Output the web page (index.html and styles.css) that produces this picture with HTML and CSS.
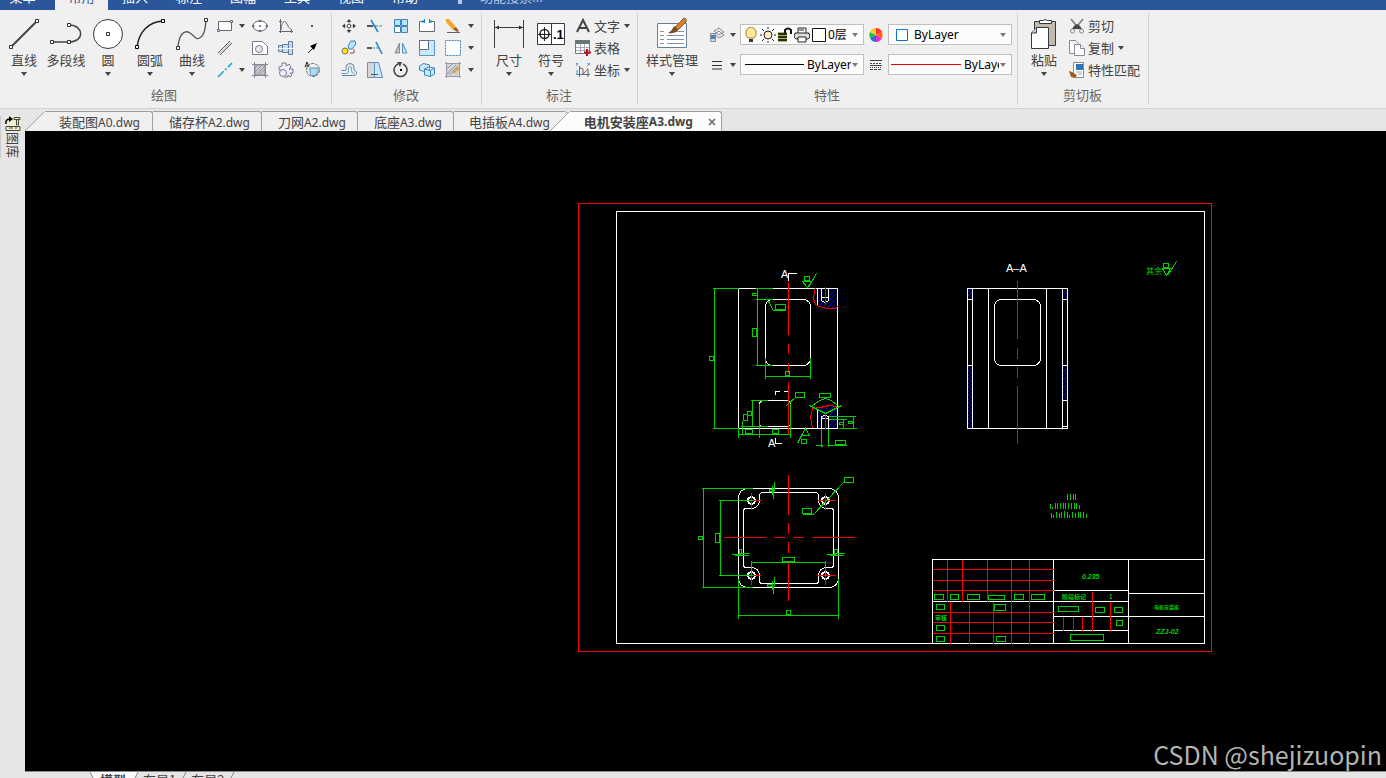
FILE: index.html
```html
<!DOCTYPE html>
<html lang="zh-CN">
<head>
<meta charset="utf-8">
<title>电机安装座A3.dwg</title>
<link rel="stylesheet" href="styles.css">
</head>
<body>
<svg class="defs" aria-hidden="true">
  <symbol id="down" viewBox="0 0 8 8"><path d="M1 2h6L4 6z" fill="#444"/></symbol>
</svg>

<nav class="menubar">
  <a href="#">菜单</a><a href="#" class="current">常用</a><a href="#">插入</a><a href="#">标注</a><a href="#">图幅</a><a href="#">工具</a><a href="#">视图</a><a href="#">帮助</a>
  <svg class="tip" viewBox="0 0 6 12"><circle cx="3" cy="4" r="3"/><path d="M1 7h4v4H1z"/></svg>
  <a href="#" class="search">功能搜索...</a>
</nav>

<header class="ribbon">
  <section class="group">
    <div class="tools">
      <div class="bigs">
        <button class="big"><svg viewBox="0 0 32 32"><path d="M4 28 28 4" stroke="#444" stroke-width="2"/><g fill="#fff" stroke="#333"><path d="M1.500 27.500h3v3h-3zM27.500 1.500h3v3h-3z"/></g></svg><span>直线</span><svg class="down"><use href="#down"/></svg></button>
        <button class="big"><svg viewBox="0 0 32 32" fill="none" stroke="#444"><path d="M2 24h17c16 0 15-17 0-17" stroke-width="1.500"/><g fill="#fff" stroke="#333"><path d="M.5 22.500h3v3h-3zM17.500 22.500h3v3h-3zM17.500 5.500h3v3h-3z"/></g></svg><span>多段线</span></button>
        <button class="big"><svg viewBox="0 0 32 32"><circle cx="16" cy="16" r="14.500" fill="#fff" stroke="#333a44"/><path d="M14.500 14.500h3v3h-3z" fill="#fff" stroke="#333"/></svg><span>圆</span><svg class="down"><use href="#down"/></svg></button>
        <button class="big"><svg viewBox="0 0 32 32"><path d="M3 29C5 14 14 4 29 3" fill="none" stroke="#222" stroke-width="1.500"/><path d="M1.500 27.500h3v3h-3zM27.500 1.500h3v3h-3z" fill="#fff" stroke="#000"/></svg><span>圆弧</span><svg class="down"><use href="#down"/></svg></button>
        <button class="big"><svg viewBox="0 0 32 32"><path d="M2 29C3 17 8 11 14 15s6 8 11 4 4-11 5-16" fill="none" stroke="#555" stroke-width="1.300"/><path d="M.5 28.500h3v3h-3zM28.500.5h3v3h-3z" fill="#fff" stroke="#333"/></svg><span>曲线</span><svg class="down"><use href="#down"/></svg></button>
      </div>
      <div class="grid draw">
        <button aria-label="矩形"><svg viewBox="0 0 16 16" fill="#fff" stroke="#667"><path d="M1.500 3.500h13v9h-13z"/><path d="M.5 11.500h2v2h-2zM13.500 2.500h2v2h-2z"/></svg></button><button class="drop" aria-label="更多"><svg class="down"><use href="#down"/></svg></button>
        <button aria-label="椭圆"><svg viewBox="0 0 16 16" fill="#fff" stroke="#667"><ellipse cx="8" cy="8" rx="7" ry="5"/><path d="M7.500 7.500h1v1h-1z"/><path d="M7 2.500h2v1H7zM0 7.500h2v1H0zM14 7.500h2v1h-2zM7 12.500h2v1H7z"/></svg></button>
        <button aria-label="公式曲线"><svg viewBox="0 0 16 16" fill="none" stroke="#667"><path d="M2.500 1v14M1 13.500h14M1 3.500h3M13.500 12v3"/><path d="M3 12C4 2 7 2 9 6s2 4 5 6"/></svg></button>
        <button aria-label="点"><svg viewBox="0 0 16 16"><path d="M7 7h2v2H7z" fill="#555"/></svg></button>
        <button aria-label="平行线"><svg viewBox="0 0 16 16" stroke="#556"><path d="M1 13 13 1M3 15 15 3"/><path d="m2 14 12-12" stroke="#bbb"/></svg></button><i></i>
        <button aria-label="局部放大"><svg viewBox="0 0 16 16" fill="#fff" stroke="#778"><path d="M.5 14.500v-13h10l5 5v8z"/><circle cx="7" cy="9" r="3.500" fill="#eee"/><path d="M7 9h.5"/></svg></button>
        <button aria-label="轴"><svg viewBox="0 0 16 16" fill="#c4dcf2" stroke="#667f98"><path d="M.5 5.500h4v6h-4zM4.500 4.500h6v8h-6zM10.500 1.500h4v13h-4z"/><path d="M0 8.500h16" stroke="#fff"/></svg></button>
        <button aria-label="箭头"><svg viewBox="0 0 16 16"><path d="m4 13 6-6" stroke="#222"/><path d="m13 3-3 7-4-4z"/></svg></button>
        <button aria-label="中心线"><svg viewBox="0 0 16 16"><path d="M1 15 15 1" stroke="#16a0e0" stroke-width="1.500" stroke-dasharray="8 2 2 2"/></svg></button><button class="drop" aria-label="更多"><svg class="down"><use href="#down"/></svg></button>
        <button aria-label="填充"><svg viewBox="0 0 16 16" stroke="#889" fill="none"><path d="M3 3h10v10H3z" fill="#c4c8cc"/><path d="m3 6 3-3m-3 7 7-7m-6 10 9-9m-6 9 6-6" stroke="#999"/><path d="M0 2.500h16M2.500 0v16M0 13.500h16M13.500 0v16"/></svg></button>
        <button aria-label="齿轮"><svg viewBox="0 0 16 16" fill="#eef" stroke="#778"><path d="M4 1h4v3l3-2 2 3-2 2h4v4h-3l2 2-2 2-2-2v2H6"/><path d="M4 1v3L1 5v3h2"/><circle cx="5" cy="11" r="3.500"/></svg></button>
        <button aria-label="剖视"><svg viewBox="0 0 16 16" fill="none" stroke="#667"><circle cx="9" cy="8" r="6.500" stroke-dasharray="3 1"/><path d="M6 6h8v4q-1 4-6 4-2-1-2-4z" fill="#a9dcf5" stroke="#68a"/><path d="M1 5 3 0l2 5M2 4h2" stroke="#222"/></svg></button>
      </div>
    </div>
    <h2>绘图</h2>
  </section>

  <section class="group">
    <div class="tools">
      <div class="grid modify">
        <button aria-label="移动"><svg viewBox="0 0 16 16" fill="#444"><path d="M8 1 5.500 4h5zM8 15l-2.500-3h5zM1 8l3-2.500v5zM15 8l-3-2.500v5z"/><path d="M6.500 6.500h3v3h-3z" fill="#fff" stroke="#667"/><path d="M4 7.500h2v1H4zM10 7.500h2v1h-2zM7.500 4h1v2h-1zM7.500 10h1v2h-1z" opacity=".6"/></svg></button>
        <button aria-label="裁剪"><svg viewBox="0 0 16 16" fill="none"><path d="M0 8h6" stroke="#555" stroke-width="2"/><path d="M8 8h8" stroke="#38a" stroke-dasharray="3 1"/><path d="m4 2 7 12" stroke="#1684d0" stroke-width="1.500"/></svg></button>
        <button aria-label="阵列"><svg viewBox="0 0 16 16" fill="#b7e3f8" stroke="#3b83bd"><path d="M1.500 1.500h6v6h-6zM8.500 1.500h6v6h-6zM8.500 8.500h6v6h-6z"/><path d="M1.500 8.500h6v6h-6z" fill="#fff"/></svg></button>
        <button aria-label="打断"><svg viewBox="0 0 16 16" fill="none"><path d="M4 3.500H.5v10h15v-10H12" stroke="#667" fill="#fff"/><path d="M3 3.500h3M10 3.500h3" stroke="#1684d0" stroke-width="2"/><path d="M5.500 1v4M10.500 1v4" stroke="#1684d0"/></svg></button>
        <button aria-label="删除"><svg viewBox="0 0 16 16"><path d="m1 1 3 0 7 8-3 3-7-8z" fill="#f5a623"/><path d="m8 11 3-2 3 4-2 1z" fill="#9a5a3a"/><path d="M2 14.500h13" stroke="#666"/></svg></button><button class="drop" aria-label="更多"><svg class="down"><use href="#down"/></svg></button>
        <button aria-label="复制对象"><svg viewBox="0 0 16 16"><path d="m7 6 3-5h4l1 3-4 5H8z" fill="#b7e3f8" stroke="#3b83bd"/><circle cx="4" cy="11" r="3" fill="#ffe600" stroke="#776"/><path d="M9 13h4v-4" fill="none" stroke="#a43"/></svg></button>
        <button aria-label="延伸"><svg viewBox="0 0 16 16"><path d="M0 8h5" stroke="#555" stroke-width="2"/><path d="M6 8h6" stroke="#38a" stroke-dasharray="2 1"/><path d="m9 2 6 12" stroke="#1684d0" stroke-width="1.500"/></svg></button>
        <button aria-label="镜像"><svg viewBox="0 0 16 16"><path d="M6.500 3v10H2z" fill="#bbb" stroke="#889"/><path d="M9.500 3v10H14z" fill="#b7e3f8" stroke="#5a93bd"/></svg></button>
        <button aria-label="缩放"><svg viewBox="0 0 16 16"><path d="M.5.500h15v15H.500z" fill="#c8eafa" stroke="#5a93bd"/><path d="M.5.500h9v9h-9z" fill="#fff" stroke="#667"/></svg></button>
        <button aria-label="选择"><svg viewBox="0 0 16 16"><path d="M.5.500h15v15H.500z" fill="#fff" stroke="#3b83bd" stroke-dasharray="2 1"/></svg></button><button class="drop" aria-label="更多"><svg class="down"><use href="#down"/></svg></button>
        <button aria-label="等距"><svg viewBox="0 0 16 16" fill="none" stroke="#667f98"><path d="M.5 8.500h4q1 0 .5-3 0-4 4-4t4 4q-.5 3 1 3 2 1 1.500 3t-3 2H1"/><path d="M.5 11.500h5q3-1 2-3-1-4 1.500-4t1.500 4q0 3 3 3" stroke="#55a6d9"/></svg></button>
        <button aria-label="拉伸"><svg viewBox="0 0 16 16"><path d="M.5.500h9v15h-9z" fill="#d4d6da" stroke="#889"/><path d="M7.500.5h4l4 15h-8z" fill="#c8eafa" stroke="#5a93bd"/><path d="M4 12.500h7" stroke="#555"/></svg></button>
        <button aria-label="旋转"><svg viewBox="0 0 16 16"><path d="M10 2a6.500 6.500 0 1 1-5 0" fill="none" stroke="#444" stroke-width="1.500"/><path d="M4 0h5L7 5z" fill="#444"/><path d="M7 7h2v2H7z"/></svg></button>
        <button aria-label="分解"><svg viewBox="0 0 16 16" fill="#c8eafa" stroke="#3b83bd"><path d="m.5 4 4-2.500 6 1.500v5l-4 2-6-2z"/><path d="m5.500 7 4-2 6 1v6l-4 2.500-6-1.500zM5.500 7l6 1.500 4-2.500M11.500 8.500v6"/></svg></button>
        <button aria-label="编辑填充"><svg viewBox="0 0 16 16" fill="none" stroke="#667"><path d="M1.500 1.500h13v13h-13z" fill="#d0d4d8"/><path d="m2 7 5-5m-5 10 9-9m-7 10 9-9" stroke="#999"/><path d="M0 1.500h16M1.500 0v16M0 14.500h16M14.500 0v16" stroke="#99a"/><path d="m8 11 7-6" stroke="#e69b2f" stroke-width="2"/></svg></button><button class="drop" aria-label="更多"><svg class="down"><use href="#down"/></svg></button>
      </div>
    </div>
    <h2>修改</h2>
  </section>

  <section class="group">
    <div class="tools">
      <div class="bigs dims">
        <button class="big"><svg viewBox="0 0 32 32"><path d="M1.500 2v28M30.500 2v28M2 9.500h28" stroke="#3a3f4a" fill="none"/><path d="m2 9.500 4-2v4zM30 9.500l-4-2v4z" fill="#333"/></svg><span>尺寸</span><svg class="down"><use href="#down"/></svg></button>
        <button class="big"><svg viewBox="0 0 32 32"><path d="M2.500 5.500h27v21h-27zM16.500 5v22" fill="#fff" stroke="#333a44"/><circle cx="9.500" cy="16" r="4.500" fill="none" stroke="#222" stroke-width="1.500"/><path d="M3 16.500h13M9.500 9v14" stroke="#222"/><text x="18" y="21" class="symbol-no">.1</text></svg><span>符号</span><svg class="down"><use href="#down"/></svg></button>
      </div>
      <div class="list">
        <button><svg viewBox="0 0 16 16"><path d="M2 14 8 2l6 12M4 10h8" fill="none" stroke="#444" stroke-width="2"/></svg><span>文字</span><svg class="down"><use href="#down"/></svg></button>
        <button><svg viewBox="0 0 16 16"><path d="M.5.500h14v13H.500z" fill="#fff" stroke="#778"/><path d="M0 0h15v4H0z" fill="#677"/><path d="M1 7.500h13M1 10.500h13M5.500 4v9M9.500 4v9" stroke="#aab"/><path d="M12 9v7M9 12.500h7" stroke="#c1121f" stroke-width="2"/></svg><span>表格</span></button>
        <button><svg viewBox="0 0 16 16" fill="none"><path d="M4.500 4v11M2 12.500h13" stroke="#667"/><path d="m5 6 3 1v5l5-5v8" stroke="#667"/><path d="m1 1 2 2M3 1 1 4M12 1l3 2M15 1l-3 3M1 9h2l-2 3h2" stroke="#49a0dc"/></svg><span>坐标</span><svg class="down"><use href="#down"/></svg></button>
      </div>
    </div>
    <h2>标注</h2>
  </section>

  <section class="group props">
    <div class="tools">
      <button class="big wide"><svg viewBox="0 0 32 32"><path d="M1.500 5.500h29v24h-29z" fill="#fff" stroke="#667f98"/><path d="M4 13.500h4M4 17.500h4M4 21.500h4M4 25.500h4M11 17.500h17M11 21.500h17M11 25.500h17M20 13.500h8" stroke="#8492a5"/><path d="M19 9 28 0l2 1v3l-8 8z" fill="#d9822b" stroke="#8a5a2b"/><path d="m18 8 4 4q-3 4-10 3 4-2 6-7z" fill="#7a4a22"/></svg><span>样式管理</span><svg class="down"><use href="#down"/></svg></button>
      <div class="combos">
        <button aria-label="图层"><svg viewBox="0 0 16 16" fill="#eee" stroke="#889"><path d="m5 4 5-3 5 4-5 3zM5 7l5-3 5 4-5 3z"/><path d="M1.500 6.500h5v8h-5z" fill="#cde"/><path d="M2 8h4v4H2z" fill="#4a86bd" stroke="none"/></svg></button>
        <button class="drop" aria-label="更多图层"><svg class="down"><use href="#down"/></svg></button>
        <label class="combo layer">
          <svg viewBox="0 0 16 16"><path d="M5 11Q2 8 3 4q2-4 5-4t5 4q1 4-2 7z" fill="#ffe9a0" stroke="#a88420"/><path d="M6 12h4v3H6z" fill="#333"/></svg>
          <svg viewBox="0 0 16 16" fill="none" stroke="#222"><circle cx="8" cy="8" r="4" fill="#ffe9c8"/><path d="M8 0v2M8 14v2M0 8h2M14 8h2M2 2l2 2M12 12l2 2M14 2l-2 2M4 12l-2 2"/></svg>
          <svg viewBox="0 0 16 16"><path d="M1 6h9v2H1zM1 9h9v2H1zM1 12h9v2H1z"/><path d="M1 5h9v10H1z" fill="#560" opacity=".5"/><path d="M8 6V3q3-3 6 0v4" fill="none" stroke="#111" stroke-width="2"/></svg>
          <svg viewBox="0 0 16 16" fill="#fff" stroke="#222"><path d="M4 6V1h8v5"/><path d="M1 6h14l1 4-2 2H2l-2-2z" fill="#ddd"/><path d="M4 10h8v5H4zM5 3h5"/></svg>
          <svg viewBox="0 0 16 16"><path d="M1.500 1.500h13v13h-13z" fill="#fff" stroke="#111"/></svg>
          <select aria-label="当前图层"><option>0层</option></select><svg class="down"><use href="#down"/></svg>
        </label>
        <svg class="wheel" viewBox="-8 -8 16 16"><path d="M0 0V-7A7 7 0 0 1 6-3z" fill="#f33"/><path d="m0 0 6-3A7 7 0 0 1 6 3z" fill="#f60"/><path d="m0 0 6 3A7 7 0 0 1 0 7z" fill="#d3c"/><path d="M0 0v7a7 7 0 0 1-6-4z" fill="#36d"/><path d="m0 0-6 3a7 7 0 0 1 0-6z" fill="#2b4"/><path d="m0 0-6-3a7 7 0 0 1 6-4z" fill="#fc2"/></svg>
        <label class="combo color"><svg viewBox="0 0 16 16"><path d="M2.500 2.500h11v11h-11z" fill="#fff" stroke="#0a74d0"/></svg><select aria-label="颜色"><option>ByLayer</option></select><svg class="down"><use href="#down"/></svg></label>
        <button aria-label="线宽"><svg viewBox="0 0 16 16" stroke="#333"><path d="M3 4.500h10M3 8.500h10M3 12h10"/></svg></button>
        <button class="drop" aria-label="更多线宽"><svg class="down"><use href="#down"/></svg></button>
        <label class="combo width"><i class="line"></i><select aria-label="线宽值"><option>ByLayer</option></select><svg class="down"><use href="#down"/></svg></label>
        <svg class="wheel" viewBox="0 0 16 16" stroke="#444"><path d="M2 3.500h12"/><path d="M2 6.500h12" stroke-dasharray="2 1"/><path d="M2 8.500h12"/><path d="M2 10.500h12" stroke-dasharray="1 1"/><path d="M2 12.500h12" stroke-dasharray="3 1"/></svg>
        <label class="combo type"><i class="line red"></i><select aria-label="线型"><option>ByLayer</option></select><svg class="down"><use href="#down"/></svg></label>
      </div>
    </div>
    <h2>特性</h2>
  </section>

  <section class="group">
    <div class="tools">
      <button class="big paste"><svg viewBox="0 0 32 32"><path d="M6.500 3.500h21v24h-21z" fill="#c3b9ae" stroke="#333a44"/><path d="M11.500 5.500v-3h4q1-2 4 0h4v3z" fill="#fff" stroke="#333"/><path d="m3.500 15 5-5.500h12v21h-17z" fill="#fff" stroke="#333a44"/><path d="M3.500 15h5V9.500" fill="#ccd" stroke="#333a44"/></svg><span>粘贴</span><svg class="down"><use href="#down"/></svg></button>
      <div class="list clip">
        <button><svg viewBox="0 0 16 16" fill="none" stroke="#888"><path d="m2 1 8 10M14 1 6 11" stroke-width="2"/><path d="m5 8 3-2 3 2 2 3H3z" fill="#444" stroke="none"/><circle cx="3.500" cy="13" r="2"/><circle cx="12.500" cy="13" r="2"/></svg><span>剪切</span></button>
        <button><svg viewBox="0 0 16 16" fill="#fff" stroke="#889"><path d="M.5.500h6l3 3v10h-9z"/><path d="M5.500 4.500h6l4 4v7h-10z"/><path d="M11.500 4.500v4h4"/></svg><span>复制</span><svg class="down"><use href="#down"/></svg></button>
        <button><svg viewBox="0 0 16 16"><path d="M4.500.5h10v15h-10z" fill="#fff" stroke="#889"/><path d="M7 2h7v6H7z" fill="#3474b0"/><path d="M7 10h6M9 12h4" stroke="#9ab"/><path d="m0 9 3 1 5 3-2 3-4-1z" fill="#a85a1c"/></svg><span>特性匹配</span></button>
      </div>
    </div>
    <h2>剪切板</h2>
  </section>
</header>

<main class="work">
  <aside class="dock"><button><svg viewBox="0 0 16 16"><path d="M0 0h16v16H0z" fill="#f0f0d0"/><path d="M1 8V5q1-2 4-2" fill="none" stroke="#000" stroke-width="1.500"/><path d="m4 0 4 3-4 3z"/><path d="M9 1.500h6v2H9zM11.500 4v5h2V4M1 10.500h14v4H1zM4 12h4M10 12h2" fill="none" stroke="#444"/></svg><span>图库</span></button></aside>
  <div class="document">
    <nav class="doctabs">
      <svg class="slant" viewBox="0 0 20 20"><path d="M0 20 20 0v20z" fill="#f0f0f0"/><path d="M0 20 19 1" stroke="#a0a0a0"/></svg>
      <a href="#" class="first">装配图<b>A0.dwg</b></a><a href="#">储存杯<b>A2.dwg</b></a><a href="#">刀网<b>A2.dwg</b></a><a href="#">底座<b>A3.dwg</b></a><a href="#" class="last">电插板<b>A4.dwg</b></a>
      <svg class="slant" viewBox="0 0 20 20"><path d="M0 0h15l3 2L0 20z" fill="#f0f0f0"/><path d="M0 20 20 0v20z" fill="#fcfcfc"/><path d="M0 .5h15l3 2M0 20 19 1" stroke="#a0a0a0" fill="none"/></svg>
      <a href="#" class="active">电机安装座<b>A3.dwg</b><svg viewBox="0 0 8 8"><path d="m1 1 6 6M7 1 1 7" stroke="#666" stroke-width="1.500"/></svg></a>
    </nav>
    <div class="canvas">
      <svg class="drawing" viewBox="25 131 1361 640">
        <defs><clipPath id="cut">
          <path d="M817 288h20v18l-4 2h-8l-8-3zM817 408l11-3 9 1v22h-20zM967 288h5v11h-5zM967 365h5v63h-5zM1062 288h5v11h-5zM1062 365h5v35h-5zM1062 426h5v2h-5z"/>
        </clipPath></defs>
        <g transform="translate(.5 .5)">
          <!-- hatched sections -->
          <g clip-path="url(#cut)" class="hatch">
            <path d="M817 292l20-20M817 297l20-20M817 302l20-20M817 307l20-20M817 312l20-20M817 317l20-20M817 322l20-20M817 327l20-20"/>
            <path d="M817 407l20-20M817 412l20-20M817 417l20-20M817 422l20-20M817 427l20-20M817 432l20-20M817 437l20-20M817 442l20-20M817 447l20-20"/>
            <path d="M967 292l5-5M967 296l5-5M967 300l5-5M967 304l5-5M967 368l5-5M967 372l5-5M967 376l5-5M967 380l5-5M967 384l5-5M967 388l5-5M967 392l5-5M967 396l5-5M967 400l5-5M967 404l5-5M967 408l5-5M967 412l5-5M967 416l5-5M967 420l5-5M967 424l5-5M967 428l5-5M967 432l5-5"/>
            <path d="M1062 292l5-5M1062 296l5-5M1062 300l5-5M1062 304l5-5M1062 368l5-5M1062 372l5-5M1062 376l5-5M1062 380l5-5M1062 384l5-5M1062 388l5-5M1062 392l5-5M1062 396l5-5M1062 400l5-5M1062 404l5-5M1062 430l5-5"/>
          </g>
          <path d="M821 288h7v13h-7zM821 417h7v11h-7z" fill="#000"/>
          <!-- outlines -->
          <g class="white">
            <path d="M616 211h588v432H616zM738 288h99v140h-99z"/>
            <rect x="765" y="299" width="45" height="66" rx="7"/><rect x="759" y="400" width="31" height="26" rx="4"/>
            <path d="M788 280v-7h8M775 394v-3h4M783 391h5M775 437v6h6M817 288v17M821 288v12l3 2h1l3-2v-12M821 297h7M817 408v20M821 428v-12l3-1h1l3 1v12M821 418h7"/>
            <rect x="738" y="488" width="100" height="99" rx="9"/>
            <path d="M761 492h55l2 2v6a8 8 0 0 0 8 8h6l1 2v55l-1 2h-6a8 8 0 0 0-8 8v7l-2 1h-55l-2-1v-7a8 8 0 0 0-8-8h-7l-1-2v-55l1-2h7a8 8 0 0 0 8-8v-6z"/>
            <circle cx="751" cy="500" r="4"/><circle cx="825" cy="500" r="4"/><circle cx="751" cy="575" r="4"/><circle cx="825" cy="575" r="4"/>
            <circle cx="751" cy="500" r="3"/><circle cx="825" cy="500" r="3"/><circle cx="751" cy="575" r="3"/><circle cx="825" cy="575" r="3"/>
            <path d="M967 288h100v140H967zM972 288v140M988 288v140M1046 288v140M1062 288v140M967 299h5M967 365h5M1062 299h5M1062 365h5M1062 400h5M1062 426h5"/>
            <rect x="994" y="299" width="46" height="66" rx="7"/>
          </g>
          <!-- centre lines and frame -->
          <g class="redline">
            <path d="M578 203h633v448H578z"/>
            <path d="M788 281v53M788 343v10M788 362v10M788 381v52M825 286v18M825 413v16M815 288q-4 12 1 17 9 4 19 3l2-2M837 406l-9-1-8 2-8 1-2 9 2 11"/>
            <path d="M788 474v40M788 522v11M788 541v11M788 560v40M723 537h42M773 537h11M793 537h10M812 537h42"/>
            <path d="M751 492v17M751 500h9M825 492v17M817 500h18M751 567v17M751 575h9M825 567v17M817 575h18"/>
            <path d="M1017 280v58M1017 347v11M1017 366v11M1017 385v58"/>
          </g>
          <!-- dimensions -->
          <g class="green">
            <path d="M712 288h26M712 428h26M714 288v140M709 356h4v4h-4zM755 288h17M755 299h17M755 365h17M757 288v77M752 293h5v2h-5zM752 328h4v8h-4z"/>
            <path d="M765 357v21M810 357v21M765 376h45M785 371h4v4h-4zM775 304h10v5h-10zM785 310h-12l-5-9"/>
            <path d="M804 276h5v4h-5zM802 281h9l-4 6zM808 287l8-14"/>
            <path d="M795 392h9v5h-9zM795 397l-9 8M750 400h17M740 426h27M752 400v26M747 411h4v4h-4zM743 414h4v6h-4zM742 420v14M745 429h7v4h-7zM772 429h6v4h-6zM738 434h52M738 428v9M759 403v34M790 403v34"/>
            <path d="M801 439h5v4h-5zM805 428l-4 7h8zM801 435l-4 8M819 393h11v4h-11zM812 405l7-5 6-2 6 2 6 5M809 405l16 8 16-8"/>
            <path d="M828 416h27M828 419h18M838 428h18M843 419v9M839 422h4v2h-4zM853 416v12M848 421h4v2h-4zM821 428v18M828 428v18M815 445h6l2 1M828 445h18M835 440h10v4h-10z"/>
            <path d="M701 488h51M701 587h51M703 488v99M698 536h4v3h-4zM718 500h34M718 575h34M720 500v75M715 533h4v9h-4z"/>
            <path d="M751 560v15M825 560v15M751 562h74M782 557h12v4h-12zM738 578v40M838 578v40M738 615h100M786 610h4v4h-4z"/>
            <path d="M732 554l18-1M734 555h14M739 549h2v4h-2zM827 554l18-1M829 555h14M834 549h3v4h-3zM774 482l-1 17M772 485v9M769 489h4v2h-4zM774 577l-1 17M772 580v9M767 584h5v2h-5z"/>
            <path d="M844 477h9v5h-9zM843 482l-30 32h-11M802 508h9v5h-9zM1163 263h5v4h-5zM1162 268h8l-4 7zM1167 275l9-14"/>
            <path d="M1067 493v6M1070 493v6M1073 493v6M1075 493v6M1050 503v5M1052 506v2M1055 502v6M1057 502v6M1060 502v6M1063 502v6M1065 502v6M1068 502v6M1071 502v6M1074 502v6M1076 502v6M1079 504v4"/>
            <path d="M1051 512v5M1053 514v3M1056 511v6M1059 512v5M1061 511v6M1064 510v7M1067 511v6M1069 514v3M1072 511v6M1075 512v5M1078 511v6M1080 511v6M1083 511v6M1086 513v4"/>
          </g>
          <!-- title block -->
          <path class="white" d="M932 643v-84h272M1053 559v84M1128 559v84M932 601h196M1053 590h75M1053 616h151M1053 630h75M1128 593h76"/>
          <path class="redline" d="M932 569h121M932 580h121M932 590h121M932 612h121M932 622h121M932 633h121M947 559v42M962 559v42M987 559v42M1011 559v84M1029 559v84M950 601v42M969 601v42M993 601v42M1092 591v39M1110 601v29M1063 616v14M1073 616v14M1082 616v14"/>
          <path class="green" d="M934 594h9v5h-9zM950 594h8v5h-8zM967 594h12v5h-12zM988 595h16v4h-16zM1014 594h9v5h-9zM1031 594h13v5h-13zM936 604h8v5h-8zM994 604h11v6h-11zM936 625h8v5h-8zM936 636h8v5h-8zM996 636h9v5h-9zM1058 606h20v5h-20zM1095 607h9v5h-9zM1114 607h8v5h-8zM1116 620h6v5h-6zM1070 634h33v6h-33z"/>
        </g>
        <g class="cad">
          <text x="781" y="278">A</text><text x="768" y="447">A</text><text x="1006" y="272">A–A</text>
        </g>
        <g class="cad small">
          <text class="note" x="1146" y="274">其余</text><text x="935" y="620">审核</text><text x="1062" y="599">阶段标记</text><text x="1109" y="599">1</text><text class="name" x="1154" y="609">电机安装座</text>
          <text class="num" x="1082" y="579">0.235</text><text class="num" x="1156" y="634">ZZJ-02</text>
        </g>
      </svg>
      <p class="watermark">CSDN @shejizuopin</p>
    </div>
    <nav class="layouts">
      <svg class="steps" viewBox="0 0 65 7"><path d="M3 6v1M13 6v1M22 6v1M32 6v1M41 6v1M50 6v1M57 6v1" stroke="#888"/></svg>
      <svg class="edge" viewBox="0 0 5 8"><path d="M0 0h5v8z" fill="#fcfcfc"/><path d="m0 0 4 8" stroke="#888"/></svg>
      <a href="#" class="active">模型</a>
      <svg class="edge" viewBox="0 0 5 8"><path d="M0 0h4L0 8z" fill="#fcfcfc"/><path d="M4 0 0 8" stroke="#888"/></svg>
      <a href="#">布局1</a>
      <svg class="edge" viewBox="0 0 5 8"><path d="M4 0 0 8" stroke="#888"/></svg>
      <a href="#">布局2</a>
      <svg class="edge" viewBox="0 0 5 8"><path d="M4 0 0 8" stroke="#888"/></svg>
    </nav>
  </div>
</main>
</body>
</html>
```
FILE: styles.css
```css
* { box-sizing: border-box; }
body {
  margin: 0; height: 100vh; overflow: hidden;
  display: flex; flex-direction: column;
  background: #e6e6e6; color: #444;
  font: 13px/18px "Noto Sans CJK SC", sans-serif;
}
a { color: inherit; text-decoration: none; white-space: nowrap; }
button { border: 0; padding: 0; margin: 0; background: none; font: inherit; color: inherit; white-space: nowrap; }
svg { display: block; flex: none; width: 16px; height: 16px; }
.defs { display: none; }
.down { width: 8px; height: 8px; }

.menubar { flex: none; height: 10px; overflow: hidden; display: flex; align-items: flex-end; background: #2b579a; color: #fff; }
.menubar a { flex: none; width: 54px; line-height: 26px; text-align: center; }
.menubar a:first-child { width: 55px; padding-right: 10px; }
.menubar .current { width: 53px; background: #f0f0f0; color: #2b579a; }
.menubar .tip { width: 6px; height: 12px; margin: 0 17px 5px 25px; fill: #b8c6de; }
.menubar .search { width: auto; color: #b8c6de; }

.ribbon { flex: none; display: flex; padding: 3px 0; background: #f0f0f0; border-bottom: 1px solid #d2d2d2; }
.group { flex: none; display: flex; flex-direction: column; padding: 2px 5px 0 4px; border-right: 1px solid #d2d2d2; }
.group:first-child { padding: 2px 6px 0 3px; }
.group h2 { margin: 4px 0 0; font-size: 13px; line-height: 20px; font-weight: 400; color: #666; text-align: center; }
.tools { display: flex; height: 66px; }
.bigs { display: flex; }
.big { width: 42px; display: flex; flex-direction: column; align-items: center; padding-top: 3px; }
.big svg:first-child { width: 32px; height: 32px; margin-bottom: 1px; }
.big .down { margin-top: 1px; }
.wide { width: 56px; margin: 0 8px 0 2px; }
.paste { margin: 0 1px; }
.symbol-no { font: 700 13px "Liberation Sans", sans-serif; }
.grid { display: grid; grid-auto-rows: 22px; }
.grid button { display: flex; align-items: center; justify-content: center; }
.draw { grid-template-columns: 24px 10px 26px 26px 26px; }
.modify { grid-template-columns: repeat(5, 26px) 10px; }
.dims { margin-left: 2px; }
.list { display: flex; flex-direction: column; width: 57px; margin-left: 3px; }
.list button { height: 22px; display: flex; align-items: center; gap: 3px; }
.clip { width: 74px; }

.combos { display: grid; grid-template: 21px 21px / 18px 14px 124px 24px 124px; gap: 9px 0; padding-top: 9px; align-items: center; justify-items: center; }
.combo { width: 124px; height: 21px; overflow: hidden; display: flex; align-items: center; padding: 0 2px; background: #fcfcfc; border: 1px solid #c0c0c0; }
.combo select { appearance: none; flex: 1; min-width: 0; border: 0; padding: 0; background: none; color: #000; font: 12px/18px "Noto Sans", "Noto Sans CJK SC", sans-serif; }
.combo .down { margin-right: 2px; opacity: .7; }
.layer svg { margin-right: 1px; }
.color { padding-left: 5px; }
.color select { margin-left: 4px; }
.line { width: 59px; height: 1px; margin: 0 3px 0 2px; background: #000; flex: none; }
.red { width: 70px; margin-left: 0; background: #e00; }

.work { flex: 1; min-height: 0; display: flex; }
.dock { flex: none; width: 25px; padding-top: 7px; }
.dock button { display: flex; flex-direction: column; align-items: center; padding-left: 4px; border-left: 1px solid #ccc; }
.dock span { writing-mode: vertical-rl; text-orientation: sideways; line-height: 16px; }
.document { flex: 1; min-width: 0; display: flex; flex-direction: column; }
.doctabs { flex: none; display: flex; padding-top: 2px; height: 22px; }
.doctabs a { height: 20px; line-height: 19px; border: 1px solid #a0a0a0; border-width: 1px 1px 0 0; border-radius: 0 3px 0 0; background: #f0f0f0; padding: 0 11px 0 16px; }
.doctabs b { font: 12px "Noto Sans", sans-serif; }
.doctabs .first { padding: 0 12px 0 14px; }
.doctabs .last { border-right: 0; border-radius: 0; padding: 0 0 0 15px; }
.doctabs .active { display: flex; align-items: center; padding: 0 5px 0 14px; background: #fcfcfc; font-weight: 700; }
.doctabs .active b { font-weight: 700; }
.doctabs .active svg { width: 8px; height: 8px; margin-left: 15px; }
.slant { width: 20px; height: 20px; }

.canvas { flex: 1; min-height: 0; position: relative; background: #000; }
.drawing { width: 100%; height: 100%; shape-rendering: crispEdges; }
.white, .redline, .green, .hatch { fill: none; stroke: #fff; }
.redline { stroke: #f00; }
.green { stroke: #00d000; }
.hatch { stroke: #00f; }
.cad { font: 11px "Liberation Sans", sans-serif; fill: #fff; }
.cad.small { font: 700 6px "Noto Sans CJK SC", sans-serif; fill: #00d000; }
.cad .num { font: italic 700 7px "Liberation Sans", sans-serif; }
.cad .note { font-size: 8px; font-weight: 400; }
.cad .name { font-size: 5px; }
.watermark { position: absolute; right: 4px; bottom: 0; margin: 0; color: #b4b4b4; font: 25px/34px "Noto Sans CJK SC", sans-serif; }

.layouts { flex: none; height: 7px; overflow: hidden; display: flex; border-top: 1px solid #888; }
.layouts a { flex: none; line-height: 16px; padding: 0 6px 0 4px; }
.layouts .active { font-weight: 700; background: #fcfcfc; padding: 0 8px 0 5px; }
.steps { width: 65px; height: 7px; }
.edge { width: 5px; height: 8px; }
```
